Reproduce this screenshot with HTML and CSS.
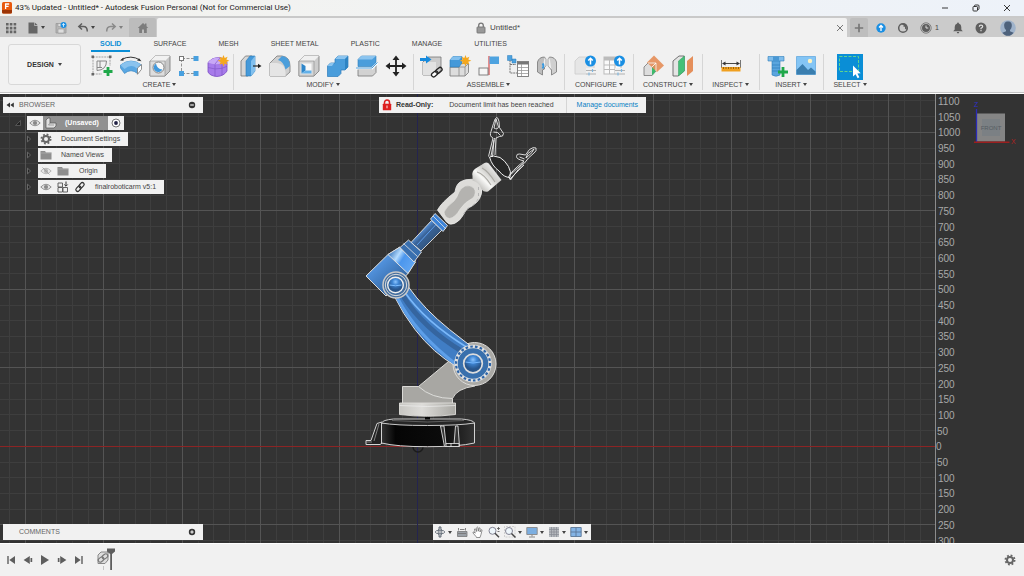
FILE: index.html
```html
<!DOCTYPE html>
<html lang="en">
<head>
<meta charset="utf-8">
<title>Untitled* - Autodesk Fusion Personal</title>
<link rel="stylesheet" href="styles.css">
</head>
<body>
<header class="titlebar">
  <svg class="app-logo" viewBox="0 0 10 12"><rect width="10" height="11.5" rx="1.5" fill="#e8590c"/><path d="M0 8h10v2a1.500 1.500 0 0 1-1.500 1.500h-7A1.500 1.500 0 0 1 0 10z" fill="#9c3506"/><path d="M3.600 7V2h3.600M3.600 4.300h3" stroke="#fff" stroke-width="1.300" fill="none"/></svg>
  <h1 class="title">43% Updated - Untitled* - Autodesk Fusion Personal (Not for Commercial Use)</h1>
  <div class="window-controls">
    <button aria-label="Minimize"><svg viewBox="0 0 10 10"><path d="M2 5h6" stroke="#222" stroke-width=".9"/></svg></button>
    <button aria-label="Restore"><svg viewBox="0 0 10 10"><rect x="2" y="3.500" width="4.500" height="4.500" rx=".8" fill="none" stroke="#222" stroke-width=".9"/><path d="M3.500 3.300V2.800Q3.500 2 4.300 2H7q1 0 1 1v2.700q0 .8-.8.8h-.5" fill="none" stroke="#222" stroke-width=".9"/></svg></button>
    <button aria-label="Close"><svg viewBox="0 0 10 10"><path d="M2 2l6 6M8 2l-6 6" stroke="#222" stroke-width=".9"/></svg></button>
  </div>
</header>

<div class="tabbar">
  <div class="quick">
    <button aria-label="Data panel"><svg class="i12" viewBox="0 0 12 12" fill="#666"><path d="M1 1h2.600v2.600H1zM4.800 1h2.600v2.600H4.800zM8.600 1h2.600v2.600H8.600zM1 4.800h2.600v2.600H1zM4.800 4.800h2.600v2.600H4.800zM8.600 4.800h2.600v2.600H8.600zM1 8.600h2.600v2.600H1zM4.800 8.600h2.600v2.600H4.800zM8.600 8.600h2.600v2.600H8.600z"/></svg></button>
    <button class="with-caret" aria-label="File"><svg class="i12" viewBox="0 0 12 12"><path d="M1.500.5h5.700v3.300h3.300V11.500h-9z" fill="#666"/><path d="M7.800.5l2.700 2.500H7.800z" fill="#666"/></svg><i class="caret"></i></button>
    <button class="save" aria-label="Save"><svg class="i12" viewBox="0 0 12 12"><path d="M1 1.500h8l2 2V11H1z" fill="#b5b5b5" stroke="#999" stroke-width=".8"/><path d="M3 1.500h4v3H3zM3 7h6v4H3z" fill="#ddd" stroke="#999" stroke-width=".6"/><circle cx="8.500" cy="3" r="3" fill="#1a8fe3"/><path d="M8.500 4.800V1.600M7.200 2.900l1.300-1.300 1.300 1.300" stroke="#fff" stroke-width=".8" fill="none"/></svg></button>
    <button class="with-caret" aria-label="Undo"><svg class="i12" viewBox="0 0 12 12"><path d="M5 1.500L1.800 4.500 5 7.500M2 4.500h4.500q3.800 0 3.800 5" fill="none" stroke="#5e5e5e" stroke-width="1.500"/></svg><i class="caret"></i></button>
    <button class="with-caret dim" aria-label="Redo"><svg class="i12" viewBox="0 0 12 12"><path d="M7 1.500l3.200 3L7 7.500M10 4.500H5.500q-3.800 0-3.800 5" fill="none" stroke="#555" stroke-width="1.500"/></svg><i class="caret"></i></button>
  </div>
  <button class="home-tab" aria-label="Home"><svg class="i12" viewBox="0 0 12 12"><path d="M6 1L.8 6h1.400v5h2.800V7.500h2V11h2.800V6h1.400L9.500 4.200V1.500H8v1.300z" fill="#7d7d7d"/></svg></button>
  <div class="doc-tab">
    <span class="doc-name"><svg class="i12" viewBox="0 0 12 12"><rect x="2" y="5" width="8" height="6" rx=".6" fill="#999" stroke="#777" stroke-width=".9"/><path d="M3.700 5V3.500a2.300 2.300 0 0 1 4.600 0V5" fill="none" stroke="#777" stroke-width="1.300"/></svg>Untitled*</span>
    <button class="doc-close" aria-label="Close document"><svg class="i8" viewBox="0 0 8 8"><path d="M1 1l6 6M7 1L1 7" stroke="#777" stroke-width="1"/></svg></button>
  </div>
  <button class="new-tab" aria-label="New design"><svg class="i10" viewBox="0 0 10 10"><path d="M5 .8v8.400M.8 5h8.400" stroke="#777" stroke-width="1.700"/></svg></button>
  <div class="status">
    <button aria-label="Updates"><svg class="i10" viewBox="0 0 10 10"><circle cx="5" cy="5" r="4.700" fill="#1a8fe3"/><path d="M5 8V2.500M3 4.500l2-2 2 2" stroke="#fff" stroke-width="1.300" fill="none"/></svg></button>
    <button aria-label="Extensions"><svg class="i12" viewBox="0 0 12 12"><circle cx="6" cy="6" r="4.300" fill="none" stroke="#5e5e5e" stroke-width="1.500"/><path d="M4.200 3h2.300v1.700H8v2l1.700 1V3L7 1.500z" fill="#5e5e5e"/></svg></button>
    <button class="jobs" aria-label="Job status: 1"><svg class="i12" viewBox="0 0 12 12"><circle cx="6" cy="6" r="5.200" fill="none" stroke="#777" stroke-width=".9"/><circle cx="6" cy="6" r="4" fill="#5e5e5e"/><path d="M6 3.500V6h2.300" stroke="#ddd" stroke-width="1" fill="none"/></svg><span>1</span></button>
    <button class="bell" aria-label="Notifications"><svg class="i12" viewBox="0 0 12 12"><path d="M6 .5q.9 0 .9 1 2.400.7 2.400 3.500v2.500l1.500 1.800H1.200l1.500-1.800V5q0-2.800 2.400-3.500 0-1 .9-1zM4.700 10h2.600q-.3 1.400-1.300 1.400T4.700 10z" fill="#5e5e5e"/></svg></button>
    <button aria-label="Help"><svg class="i12" viewBox="0 0 12 12"><circle cx="6" cy="6" r="5.500" fill="#5e5e5e"/><path d="M4.300 4.800q0-1.700 1.700-1.700t1.700 1.500Q7.700 5.500 6 6.300v.9M6 8v1.300" stroke="#ddd" stroke-width="1.200" fill="none"/></svg></button>
    <button class="avatar" aria-label="Account"><svg class="i16" viewBox="0 0 16 16"><circle cx="8" cy="8" r="7.800" fill="#9fb3cb"/><path d="M8 1.500c3 0 4 2 3.800 4.500-.2 2-1 3.300-1.800 4v1.200l3.600 1.500Q11.500 15.800 8 15.800t-5.600-3.100L6 11.200V10C5 9.300 4.300 8 4.200 6 4 3.500 5 1.500 8 1.500z" fill="#4e627c"/></svg></button>
  </div>
</div>

<div class="ribbon">
  <button class="workspace">DESIGN <i class="caret"></i></button>
  <div class="ribbon-main">
    <nav class="ribbon-tabs">
      <button class="rtab active">SOLID</button><button class="rtab">SURFACE</button><button class="rtab">MESH</button><button class="rtab">SHEET METAL</button><button class="rtab">PLASTIC</button><button class="rtab">MANAGE</button><button class="rtab">UTILITIES</button>
    </nav>
    <div class="groups">
      <section class="group">
        <div class="tools">
          <button aria-label="Create sketch"><svg viewBox="0 0 24 24"><path d="M3 3h17M3 3v17M20 3v9M3 20h9" stroke="#999" stroke-width=".9" stroke-dasharray="2 .8" fill="none"/><path d="M1.500 1.500h2.500v2.500H1.500zM19 1.500h2.500v2.500H19zM1.500 19h2.500v2.500H1.500z" fill="#666"/><path d="M7 16.500V7h9.500Q16.500 16 7 16.500zM10 7v6.500M7 13.500h5" stroke="#888" stroke-width="1" fill="none"/><path d="M18 13v9M13.500 17.500h9" stroke="#1fa84a" stroke-width="2.800"/></svg></button>
          <button aria-label="Extrude"><svg viewBox="0 0 24 24"><path d="M1.500 11Q12 3 22.500 11l-4 8.500Q12 14 5.500 19.500L1.500 14z" fill="#5aa7e2" stroke="#2e80bd" stroke-width=".6"/><path d="M1.500 11Q12 3.500 22 10.500l-4 4Q12 9.500 5.500 15z" fill="#8ac3ee"/><path d="M18.500 14l4-3.500v4.800l-4 5z" fill="#fff" stroke="#777" stroke-width=".8"/><path d="M2.500 5.500Q12 .5 21 6" fill="none" stroke="#333" stroke-width="1"/><path d="M1 6.500l3.500-3v3.300zM22.500 7.300l-4.500-.9 2-2.200z" fill="#333"/></svg></button>
          <button aria-label="Hole"><svg viewBox="0 0 24 24"><path d="M2 7l5-5h15v15l-5 5H2z" fill="#c7c7c7" stroke="#777" stroke-width=".8"/><path d="M2 7l5-5h15l-5 5z" fill="#f1f1f1"/><path d="M2 7h15v15H2z" fill="#ddd" stroke="#8c8c8c" stroke-width=".6"/><circle cx="10.500" cy="13.500" r="5.500" fill="#f8f8f8" stroke="#777" stroke-width=".9"/><path d="M8 9.500a4.600 4.600 0 1 0 6.400 6q-5.500-.5-6.400-6z" fill="#4299dc"/></svg></button>
          <button aria-label="Pattern"><svg viewBox="0 0 24 24"><path d="M5 4.500h14M4.500 5v14M5 19.500h14" stroke="#888" stroke-width=".9" stroke-dasharray="3 1.500"/><rect x="2.500" y="2.500" width="4" height="4" fill="#fff" stroke="#777"/><path d="M16.500 2h5v5h-5zM2 17h5v5H2zM16.500 17h5v5h-5z" fill="#48a0df"/></svg></button>
          <button aria-label="Create form"><svg viewBox="0 0 24 24"><path d="M2 8.500Q6 3.500 12 3.500t9 4.500v9q-3 5-10 5.500Q4 22 2 18z" fill="#a77bea" stroke="#7b4cc4" stroke-width=".8"/><path d="M2 8.500q6 3 14 1l5-2q-3-4-9-4T2 8.500z" fill="#c8a8f6"/><path d="M2 13.500q7 2.500 14 .8l5-2M9 10.500v12M16 9.500v11.500M9 10L14 4" stroke="#8257c9" stroke-width=".7" fill="none"/><path d="M17.500 1l1.200 3 2.900-1.300L20.400 5.500l3 1.200-3 1.200 1.200 2.900-2.900-1.200-1.200 3-1.200-3-2.900 1.200 1.200-2.900-3-1.200 3-1.200-1.200-2.800L16.300 4z" fill="#f5a81c"/></svg></button>
        </div>
        <button class="group-name">CREATE <i class="caret"></i></button>
      </section>
      <section class="group">
        <div class="tools">
          <button aria-label="Press pull"><svg viewBox="0 0 24 24"><path d="M2 7l4.500-5H13v15l-4 5H2z" fill="#d7d7d7" stroke="#777" stroke-width=".8"/><path d="M7 7l4-5h5v15l-4 5H7z" fill="#4599d9" stroke="#2879b5" stroke-width=".6"/><path d="M12 7l4-5v15l-4 5z" fill="#82c0ee"/><path d="M14 12h6" stroke="#222" stroke-width="1.200"/><path d="M19 9.800l3.500 2.200-3.500 2.200z" fill="#222"/></svg></button>
          <button aria-label="Fillet"><svg viewBox="0 0 24 24"><path d="M2 9l7-7h5q8 1 8 10v6l-4.500 4H2z" fill="#cfcfcf" stroke="#777" stroke-width=".8"/><path d="M2 9h7q8 1 8.500 9v4H2z" fill="#e5e5e5"/><path d="M10 6l4-4q8 1 8 10l-4.500 3.500Q16 8 10 6z" fill="#4b9edb"/></svg></button>
          <button aria-label="Shell"><svg viewBox="0 0 24 24"><path d="M2 7l5-5h15v15l-5 5H2z" fill="#ccc" stroke="#777" stroke-width=".8"/><path d="M2 7l5-5h15l-5 5z" fill="#f0f0f0"/><path d="M2 7h15v15H2z" fill="#d6d6d6" stroke="#888" stroke-width=".6"/><path d="M4.500 9.500h10v10h-10z" fill="#f8f8f8"/><path d="M4.500 9.500l4 2.500v4.500l-4 3z" fill="#2f86c9"/><path d="M4.500 19.500l4-3h6v3z" fill="#62b0e8"/></svg></button>
          <button aria-label="Combine"><svg viewBox="0 0 24 24"><path d="M1.500 12l3-3H9V5l3-3h10v11l-3 3h-4v3.500l-3 3H1.500z" fill="#4a9ddb" stroke="#2c7dbb" stroke-width=".7"/><path d="M1.500 12l3-3H9V5l3-3h10l-3 3H9v4H8l-2 3z" fill="#8bc4ef"/><path d="M19 5l3-3v11l-3 3z" fill="#2f84c3"/></svg></button>
          <button aria-label="Split body"><svg viewBox="0 0 24 24"><path d="M3 15h14l4-4v7.500L17.500 22H3z" fill="#d2d2d2" stroke="#777" stroke-width=".8"/><path d="M3 5.500L6.500 2H21v7l-4 3.500H3z" fill="#4a9ddb" stroke="#2c7dbb" stroke-width=".6"/><path d="M3 5.500L6.500 2H21l-4 3.500z" fill="#8bc4ef"/><path d="M1 14.500h16l5.500-5.500" fill="none" stroke="#fff" stroke-width="2"/><path d="M1 14h16l5.500-5.500" fill="none" stroke="#4a9ddb" stroke-width="1"/></svg></button>
          <button aria-label="Move"><svg viewBox="0 0 24 24"><path d="M12 4v16M4 12h16" stroke="#222" stroke-width="1.800"/><path d="M12 1.500L15.500 6h-7zM12 22.500L8.500 18h7zM1.500 12L6 8.500v7zM22.500 12L18 15.500v-7z" fill="#222"/></svg></button>
        </div>
        <button class="group-name">MODIFY <i class="caret"></i></button>
      </section>
      <section class="group">
        <div class="tools">
          <button aria-label="Insert component"><svg viewBox="0 0 24 24"><path d="M4 8l5-5h13v13l-5 5H4z" fill="#ccc" stroke="#777" stroke-width=".8"/><path d="M4 8h13v13H4z" fill="#e2e2e2"/><path d="M1 4h6V1.500L12.500 5.500 7 9.500V7H1z" fill="#168add"/><g transform="rotate(-40 18 18)"><rect x="11.500" y="16" width="7" height="4" rx="2" fill="#fff" stroke="#222" stroke-width="1.300"/><rect x="17" y="16" width="7" height="4" rx="2" fill="none" stroke="#222" stroke-width="1.300"/></g></svg></button>
          <button aria-label="New component"><svg viewBox="0 0 24 24"><path d="M2 13h9V9.500h9.500v9L17 22H2z" fill="#ddd" stroke="#777" stroke-width=".8"/><path d="M11 13v9M2 13h15l3.500-3.500M17 13v9" stroke="#888" stroke-width=".8" fill="none"/><path d="M2 6l3-3.500h9V9l-3 4H2z" fill="#4599d9" stroke="#2c7dbb" stroke-width=".6"/><path d="M2 6l3-3.500h9L11 6z" fill="#82c0ee"/><path d="M17.500 1l1.100 3 2.800-1.200-1.100 2.700 3 1.200-3 1.100 1.100 2.800-2.800-1.200-1.100 3-1.200-3-2.700 1.200 1.100-2.800-2.900-1.100 2.900-1.200-1.100-2.700L16.300 4z" fill="#f5a81c"/></svg></button>
          <button aria-label="Joint"><svg viewBox="0 0 24 24"><path d="M12 2v19" stroke="#d94b4b" stroke-width="1.200"/><rect x="12.500" y="2.500" width="9.500" height="7.500" fill="#4ea3e0"/><rect x="2" y="14" width="9" height="7" fill="#f6f6f6" stroke="#777" stroke-width=".9"/></svg></button>
          <button aria-label="Rigid group"><svg viewBox="0 0 24 24"><path d="M4 6v13h7M4 10.500h6" stroke="#777" stroke-width="1" fill="none" stroke-dasharray="2 .7"/><path d="M1.500 1.500H6v5H1.500zM6 5h4v4H6z" fill="#4ea3e0" stroke="#2c7dbb" stroke-width=".5"/><rect x="11.500" y="7.500" width="11" height="15" fill="#fff" stroke="#777" stroke-width=".9"/><path d="M11.500 8h11v2.500h-11z" fill="#777"/><path d="M12 13.500h10M12 16.500h10M12 19.500h10M15.500 10v12" stroke="#999" stroke-width=".8"/></svg></button>
          <button aria-label="Motion link"><svg viewBox="0 0 24 24"><path d="M2.500 8Q4 3 9.500 3v12l-2 1v5l-5-3z" fill="#bdbdbd" stroke="#777" stroke-width=".8"/><path d="M21.500 8Q20 3 14.500 3v10l2 3v5l5-3z" fill="#cfcfcf" stroke="#777" stroke-width=".8"/><path d="M9.500 3l1.500 2v7l-3.500 3M14.500 3L13 5v7l3.500 4" fill="#eee" stroke="#888" stroke-width=".7"/><path d="M7.500 9.500q2 2 0 5" stroke="#3a9ae0" stroke-width="1.800" fill="none"/></svg></button>
        </div>
        <button class="group-name">ASSEMBLE <i class="caret"></i></button>
      </section>
      <section class="group roomy">
        <div class="tools">
          <button aria-label="Configure design"><svg viewBox="0 0 24 24"><path d="M2 7l4-4h12l3 4v12l-3 1H2z" fill="#e6e6e6" stroke="#ccc" stroke-width=".8"/><circle cx="17.500" cy="7" r="5.500" fill="#1a8fe3"/><path d="M17.500 10.500V4.500M15.200 6.500l2.300-2.300 2.300 2.300" stroke="#fff" stroke-width="1.500" fill="none"/><path d="M13 14h10v8H13z" fill="#f1f1f1"/><path d="M13 16.500h10M13 20h10" stroke="#aaa" stroke-width=".9"/><path d="M19.500 15v3M16 18.500v3" stroke="#7fb8e2" stroke-width="1.200"/></svg></button>
          <button aria-label="Configuration table"><svg viewBox="0 0 24 24"><rect x="2" y="3" width="17" height="17" fill="#fafafa" stroke="#bbb"/><path d="M2 3h17v3.500H2z" fill="#bbb"/><path d="M2 11h17M2 15.500h17M7.500 6v14M13 6v14" stroke="#bbb"/><circle cx="17.500" cy="7" r="5.500" fill="#1a8fe3"/><path d="M17.500 10.500V4.500M15.200 6.500l2.300-2.300 2.300 2.300" stroke="#fff" stroke-width="1.500" fill="none"/><path d="M13 14h10v8H13z" fill="#f1f1f1"/><path d="M13 16.500h10M13 20h10" stroke="#aaa" stroke-width=".9"/><path d="M19.500 15v3M16 18.500v3" stroke="#7fb8e2" stroke-width="1.200"/></svg></button>
        </div>
        <button class="group-name">CONFIGURE <i class="caret"></i></button>
      </section>
      <section class="group roomy">
        <div class="tools">
          <button aria-label="Offset plane"><svg viewBox="0 0 24 24"><path d="M2 13l4-4h8v8l-4 4.500H2z" fill="#ddd" stroke="#777" stroke-width=".8"/><path d="M10 13l4-4v8l-4 4.500z" fill="#3cba6b"/><path d="M12 1.500L22 11.500 15 18 5 8.500z" fill="#e58f5b" opacity=".92"/><path d="M6 9h8l-4 4M14 9v8" stroke="#fff" stroke-width=".8" fill="none"/></svg></button>
          <button aria-label="Midplane"><svg viewBox="0 0 24 24"><path d="M2 7l6-5h5v15l-6 5H2z" fill="#e4e4e4" stroke="#666" stroke-width=".9"/><path d="M7.500 7l6-5v15l-6 5z" fill="#44c078" stroke="#2f9a5a" stroke-width=".5"/><path d="M16 7l6-5v15l-6 5z" fill="#e58f5b"/></svg></button>
        </div>
        <button class="group-name">CONSTRUCT <i class="caret"></i></button>
      </section>
      <section class="group">
        <div class="tools single">
          <button aria-label="Measure"><svg viewBox="0 0 24 24"><path d="M2.500 6v8M21.500 6v8" stroke="#666" stroke-width=".9"/><path d="M4 9.500h16" stroke="#333" stroke-width=".9"/><path d="M3 9.500L6.500 7.500v4zM21 9.500l-3.500-2v4z" fill="#333"/><path d="M2.500 13h19v4.500h-19z" fill="#f0a020"/><path d="M4.500 13v2M7 13v2M9.500 13v2M12 13v2M14.500 13v2M17 13v2M19.500 13v2" stroke="#7a4a00" stroke-width=".7"/></svg></button>
        </div>
        <button class="group-name">INSPECT <i class="caret"></i></button>
      </section>
      <section class="group">
        <div class="tools">
          <button aria-label="Insert fastener"><svg viewBox="0 0 24 24"><path d="M7 6h8v15q-4 2.500-8 0z" fill="#5aa5de" stroke="#2c7dbb" stroke-width=".6"/><path d="M3 2.500h16v4.500H3z" fill="#7fbdec" stroke="#2c7dbb" stroke-width=".6"/><path d="M8 2.500h6v4.500H8z" fill="#4a98d4"/><path d="M7 11h8M7 14h8M7 17h8" stroke="#2c7dbb" stroke-width=".7"/><path d="M18 13v10M13 18h10" stroke="#1fa84a" stroke-width="2.800"/></svg></button>
          <button aria-label="Canvas"><svg viewBox="0 0 24 24"><path d="M2.500 2.500h19v18h-19z" fill="#84c5f5" stroke="#5aa4db" stroke-width=".7"/><path d="M2.500 16l6-6 5.500 6 3-2.500 4.500 4v3h-19z" fill="#3a7eaf"/><circle cx="16" cy="7" r="2.200" fill="#fff3c0"/></svg></button>
        </div>
        <button class="group-name">INSERT <i class="caret"></i></button>
      </section>
      <section class="group">
        <div class="tools single">
          <button class="active-tool" aria-label="Select"><svg viewBox="0 0 26 26"><rect x="2.500" y="2.500" width="19" height="15" fill="none" stroke="#5fd38e" stroke-width="1" stroke-dasharray="3 1.500"/><path d="M16 11.500v11l2.600-2.300 2 4 1.800-.9-2-3.800 3.300-.2z" fill="#fff"/></svg></button>
        </div>
        <button class="group-name">SELECT <i class="caret"></i></button>
      </section>
    </div>
  </div>
</div>

<main class="viewport">
  <svg class="scene" viewBox="0 94 1024 449" preserveAspectRatio="xMidYMid slice">
    <defs>
      <linearGradient id="blueBox" x1="0" y1="0" x2=".7" y2=".8"><stop offset="0" stop-color="#3872b4"/><stop offset=".35" stop-color="#5496e2"/><stop offset="1" stop-color="#31629c"/></linearGradient>
      <linearGradient id="blueNeck" x1="0" y1=".2" x2="1" y2=".8"><stop offset="0" stop-color="#2f6db5"/><stop offset=".32" stop-color="#b5dcff"/><stop offset=".5" stop-color="#4b96ed"/><stop offset="1" stop-color="#67aaf4"/></linearGradient>
      <linearGradient id="rod" x1="0" y1="0" x2="1" y2="1"><stop offset=".3" stop-color="#5b9be8"/><stop offset=".45" stop-color="#3a6499"/><stop offset=".7" stop-color="#31557f"/></linearGradient>
      <linearGradient id="metal"><stop offset="0" stop-color="#c7c6c2"/><stop offset=".4" stop-color="#dddcd9"/><stop offset="1" stop-color="#aaa9a4"/></linearGradient>
      <linearGradient id="wrist" x1="0" y1="1" x2="1" y2="0"><stop offset=".1" stop-color="#aaa9a5"/><stop offset=".4" stop-color="#f8f8f6"/><stop offset=".6" stop-color="#cfcecb"/><stop offset=".8" stop-color="#eee"/></linearGradient>
      <linearGradient id="black"><stop offset="0" stop-color="#333"/><stop offset=".15" stop-color="#050505"/><stop offset=".65" stop-color="#0b0b0b"/><stop offset="1" stop-color="#333"/></linearGradient>
      <radialGradient id="ball" cx=".5" cy=".3"><stop offset="0" stop-color="#8cc5ff"/><stop offset=".4" stop-color="#3f86d4"/><stop offset="1" stop-color="#28558b"/></radialGradient>
    </defs>
    <rect y="94" width="1024" height="449" fill="#333"/>
    <g id="grid"></g>
    <path d="M417.500 94v449" stroke="#24244f" stroke-width="1"/>
    <path d="M0 446.500h936" stroke="#8c2424" stroke-width="1"/>
    <path d="M935.500 94v449" stroke="#8c8c8c" stroke-width="1"/>
    <g id="ruler" class="ruler"></g>
    <g class="view-cube">
      <rect x="977" y="113.500" width="28" height="28" fill="#858585"/>
      <rect x="982" y="119" width="18" height="17" fill="#7b8084"/>
      <path d="M976.500 142V109" stroke="#2b2bb8" stroke-width="1.300"/>
      <path d="M974 142.300h35.500" stroke="#9c1f1f" stroke-width="1.500"/>
      <text x="991" y="130" text-anchor="middle" class="cube-face">FRONT</text>
      <text x="974" y="107" class="cube-z">Z</text>
      <text x="1011" y="144" class="cube-x">X</text>
    </g>
    <g stroke-linejoin="round">
      <path d="M413 447a5 5 0 0 0 10 0" fill="none" stroke="#1c1c1c" stroke-width="1.500"/>
      <path d="M382 422l-5 1.500-6 17h-5v4h14l3-2z" fill="#222" stroke="#d5d5d5" stroke-width="1"/>
      <path d="M379 424l-5 17M366 442h6" stroke="#999" stroke-width=".8"/>
      <path d="M381.500 423v20q15 3.700 46 3.700t47-3.700v-20z" fill="url(#black)" stroke="#d2d2d2" stroke-width="1"/>
      <path d="M381.500 423q1-3 12-4h68q12 1 13 4-15 2.500-47 2.500t-46-2.500z" fill="#262626" stroke="#c8c8c8" stroke-width="1"/>
      <path d="M392 420.500q35 3 72 0" fill="none" stroke="#777" stroke-width=".7"/>
      <path d="M440.500 426h3.500l2 18.500h8l1.500-18.500h2.500l1.500 20.500h-15z" fill="#333" stroke="#ddd" stroke-width=".9"/>
      <path d="M446 443.500h13v3h-13zM451 443v3.500" fill="#222" stroke="#eee" stroke-width=".8"/>
      <path d="M425 416h5v3.500h-5z" fill="#080808"/>
      <path d="M448.500 361.500L418.500 386.500h-16v17h50v-5q4-10 22.500-12.500l-8-30z" fill="#a8a7a3" stroke="#dad9d6" stroke-width="1"/>
      <path d="M418.500 386.500q13 12 34 12" fill="none" stroke="#e2e2e0" stroke-width=".9"/>
      <path d="M399.500 403h56v11.500q-28 3.500-56 0z" fill="url(#metal)" stroke="#dfdeda" stroke-width=".9"/>
      <path d="M399.500 405.500q28 2 56 0" fill="none" stroke="#eee" stroke-width=".7"/>
      <circle cx="474.500" cy="364" r="21.500" fill="#aaa9a5" stroke="#dedddb" stroke-width="1"/>
      <path d="M408.500 287Q424 309 449.500 329.500L470 345.500 456.500 366.500Q433 353 415 329.500 403 314 394.500 296.500z" fill="#407dc4" stroke="#e3e3e3" stroke-width="1"/>
      <path d="M397.500 298Q415 333 457 365" stroke="#5d9fe9" stroke-width="3" fill="none"/>
      <path d="M403 296Q423 328 463 352" stroke="#35659f" stroke-width="5" fill="none"/>
      <path d="M404 291Q424 321 468 348" stroke="#7ab8fa" stroke-width="1.600" fill="none"/>
      <circle cx="473" cy="363.500" r="16" fill="#3970ad"/>
      <circle cx="473" cy="363.500" r="17" fill="none" stroke="#e0e0e0" stroke-width="3.400"/>
      <circle cx="473" cy="363.500" r="17" fill="none" stroke="#2e65a8" stroke-width="2.200" stroke-dasharray="2.600 2.200"/>
      <circle cx="473" cy="363.500" r="9.300" fill="url(#ball)" stroke="#ddd" stroke-width="1.700"/>
      <path d="M465.500 362q7.500 2 15 0" stroke="#75b6fc" stroke-width="1" fill="none"/>
      <path d="M366 276L388 254.500 399.500 247.300 415.500 260.500 408 273.500 386 296z" fill="url(#blueBox)" stroke="#dedede" stroke-width="1"/>
      <path d="M388 254.500L399.500 247.300 415.500 262 408 273.500z" fill="url(#blueNeck)" stroke="#dedede" stroke-width="1"/>
      <path d="M411 242.500L431.500 220.500 442 230 421 251z" fill="url(#rod)" stroke="#e3e3e3" stroke-width=".9"/>
      <path d="M417 245l19-20.500" stroke="#5b9be8" stroke-width="1"/>
      <path d="M408.500 240L421.500 252 414 262 400 247.500z" fill="#396faf" stroke="#e3e3e3" stroke-width=".9"/>
      <path d="M403.500 243.500l14 13" stroke="#e3e3e3" stroke-width=".8"/>
      <path d="M435 213.500L447.500 225.500 443 231.500 430.500 219z" fill="#3c83d8" stroke="#e3e3e3" stroke-width=".9"/>
      <path d="M433 216l13 13" stroke="#e3e3e3" stroke-width=".8"/>
      <circle cx="396" cy="285" r="13" fill="#456f9f" stroke="#c9c9c9" stroke-width="1.500"/>
      <circle cx="396" cy="285" r="10.700" fill="none" stroke="#ddd" stroke-width="1"/>
      <circle cx="395.500" cy="285" r="7.800" fill="url(#ball)" stroke="#eee" stroke-width="1.400"/>
      <path d="M389.500 285q6 1.500 12 0" stroke="#7bbcff" stroke-width="1" fill="none"/>
      <path d="M437.500 210Q441 203 455 192q1-8 6-10.500t8-2q6-1 9.500 3 4.500 5 3 11t-5 9q-4 3.500-8 5.500-3 2-5 6.500-3 6-9 9-5 2-8-1.500z" fill="#dddcd9" stroke="#efefee" stroke-width=".8"/>
      <path d="M465 186q5-1.500 9 2 3 5-1 10-8 4-12.500 10.500-5 9-11 10-5-1-5.500-6.500 2-5 10-11 3-3 5-9 2-4 6-6z" fill="#b4b3b0" stroke="#e5e5e3" stroke-width=".6"/>
      <path d="M478.500 187v11q-3 7-11 10.500-4 5-6 9" fill="none" stroke="#b5b5b5" stroke-width="1" stroke-dasharray="3 3"/>
      <path d="M472.500 176q-1-5 3-7.500l9-5.500q3-1.500 5.500 2L501.500 180 488 191.500q-4 1-6.500-2-2-7-9-9z" fill="url(#wrist)"/>
      <path d="M477 172q7 2 14 13M482 168q6 3 13 14" stroke="#aaa9a4" stroke-width="1.100" fill="none"/>
      <path d="M489.500 157l4-1 6.500 1.500q5 3 8.500 9 3 5 1.500 11-6 0-11-6.500-7-5-9.500-14z" fill="#272727" stroke="#f2f2f2" stroke-width="1"/>
      <g fill="none" stroke="#ececec" stroke-width=".9">
        <path d="M488.500 156.500L493 138q-4-2-2-6.500l2.500-8Q495 118 496.500 117.500t2.500 4l.5 6 4 6q0 3.500-4 3l-3.500 1.500-1 17"/>
        <path d="M491 156l3.500-18M492.500 157l1.500-17M494 128l2-9 2.500 8q-1 3-4.500 1zM493.500 132l4 .5 3 3"/>
        <path d="M508.500 177q2-5 15.500-16-8-2-7.500-4.500 0-3 3-2.500l6 1 4-5.500q4-3 6.500-1.500 1 3-2 5l-5.500 5-4 5q-5 4-14 17z"/>
        <path d="M510 175l14-12.500M510 179l14-14M526 157.500l2-4 6-4.500-2 3.500-6 5.500zM519.500 157l5 2"/>
      </g>
    </g>
  </svg>

  <aside class="browser">
    <header class="panel"><svg class="i8" viewBox="0 0 8 8"><path d="M4 1.500v5L.5 4zM7.800 1.500v5L4.300 4z" fill="#333"/></svg><h2>BROWSER</h2><button aria-label="Collapse browser"><svg class="i8" viewBox="0 0 8 8"><circle cx="4" cy="4" r="3.200" fill="#333"/><path d="M2.200 4h3.600" stroke="#fff" stroke-width="1.100"/></svg></button></header>
    <ul class="tree">
      <li class="root"><svg class="i8" viewBox="0 0 8 8"><path d="M6.500 1.500v5h-5z" fill="#222" stroke="#666" stroke-width=".7"/></svg>
        <div class="node"><span class="cell"><svg class="i12" viewBox="0 0 12 12"><use href="#eye"/></svg></span><span class="selected"><svg class="i12" viewBox="0 0 12 12"><path d="M1 3l2-2h2v5h6v3l-2 2H1z" fill="#e0e0e0" stroke="#555" stroke-width=".7"/><path d="M5 6L3.500 8H9" stroke="#777" stroke-width=".6" fill="none"/></svg><b>(Unsaved)</b></span><span class="cell"><svg class="i10" viewBox="0 0 10 10"><circle cx="5" cy="5" r="4" fill="#fff" stroke="#666" stroke-width=".9"/><circle cx="5" cy="5" r="1.900" fill="#224"/></svg></span></div></li>
      <li><svg class="i8" viewBox="0 0 8 8"><use href="#twist"/></svg><div class="node"><span class="cell"><svg class="i12" viewBox="0 0 12 12"><use href="#gear"/></svg></span><span class="name">Document Settings</span></div></li>
      <li><svg class="i8" viewBox="0 0 8 8"><use href="#twist"/></svg><div class="node"><span class="cell"><svg class="i12" viewBox="0 0 12 12"><use href="#folder"/></svg></span><span class="name">Named Views</span></div></li>
      <li><svg class="i8" viewBox="0 0 8 8"><use href="#twist"/></svg><div class="node"><span class="cell"><svg class="i12 faded" viewBox="0 0 12 12"><use href="#eye"/><path d="M2.500 2.500l7 7" stroke="#666" stroke-width=".8"/></svg></span><span class="cell wide"><svg class="i12" viewBox="0 0 12 12"><use href="#folder"/></svg></span><span class="name">Origin</span></div></li>
      <li><svg class="i8" viewBox="0 0 8 8"><use href="#twist"/></svg><div class="node"><span class="cell"><svg class="i12" viewBox="0 0 12 12"><use href="#eye"/></svg></span><span class="cell wide"><svg class="i12" viewBox="0 0 12 12"><path d="M1 2h4.500v4H1zM1 6.500h4.500V11H1zM6 6.500h4.500V11H6z" fill="#eee" stroke="#555" stroke-width=".9"/><path d="M9 .5v4.500M7.300 3.500L9 5.200l1.700-1.700" stroke="#333" stroke-width="1" fill="none"/></svg></span><span class="cell"><svg class="i12" viewBox="0 0 12 12"><g transform="rotate(-48 6 6)" fill="none" stroke="#333" stroke-width="1.200"><rect x=".7" y="4.200" width="6" height="3.600" rx="1.800"/><rect x="5.300" y="4.200" width="6" height="3.600" rx="1.800"/></g></svg></span><span class="name">finalroboticarm v5:1</span></div></li>
    </ul>
  </aside>

  <div class="notice" role="status">
    <svg class="i12" viewBox="0 0 12 12"><path d="M3.500 5.500V3.500a2.500 2.500 0 0 1 5 0v2" fill="none" stroke="#dd1f1f" stroke-width="1.500"/><rect x="1.800" y="4.800" width="8.400" height="6.400" rx=".5" fill="#dd1f1f"/><path d="M6 6.500v2.800" stroke="#fff" stroke-width=".9"/></svg>
    <b>Read-Only:</b><span class="message">Document limit has been reached</span><a href="#">Manage documents</a>
  </div>

  <section class="panel comments"><h2>COMMENTS</h2><button aria-label="Add comment"><svg class="i8" viewBox="0 0 8 8"><circle cx="4" cy="4" r="3.200" fill="#333"/><path d="M2.300 4h3.400M4 2.300v3.400" stroke="#fff" stroke-width="1"/></svg></button></section>

  <div class="navbar">
    <button class="with-caret" aria-label="Orbit"><svg class="i12" viewBox="0 0 12 12" fill="none" stroke="#68717a" stroke-width=".9"><ellipse cx="6" cy="6" rx="4.800" ry="1.800"/><ellipse cx="6" cy="6" rx="1.800" ry="4.500"/><path d="M6 .5v11M4.500 2L6 .5 7.500 2M4.500 10L6 11.500 7.500 10"/></svg><i class="caret"></i></button>
    <button aria-label="Look at"><svg class="i12" viewBox="0 0 12 12"><path d="M1.500 5.500h9.500v5H1.500z" fill="#9aa0a6" stroke="#777" stroke-width=".8"/><path d="M2.500 4.500V2M9.500 4.500V2M4 3.500h4.500M2 7.500h8" stroke="#777" stroke-width=".9"/></svg></button>
    <button aria-label="Pan"><svg class="i12" viewBox="0 0 12 12"><path d="M4 10.500L1 7q-.5-1.300 1-1l1.200 1.200L2.500 3q.5-1 1.200 0l.9 2.500L4.800 1.500q.7-1 1.200 0l.3 3.700.8-3.200q.8-.7 1 .3L8 6l1.200-2.200q.9-.4.800.6L9 8.500l-1 3H4.500z" fill="#fff" stroke="#666" stroke-width=".7"/></svg></button>
    <button aria-label="Zoom"><svg class="i12" viewBox="0 0 12 12"><circle cx="4.500" cy="4.800" r="3.500" fill="#eef6fb" stroke="#778" stroke-width=".9"/><path d="M7 7.300l4 4" stroke="#444" stroke-width="1.500"/><path d="M9 2.500h3M10.500 1v3M9.500 5.500h2" stroke="#555" stroke-width=".8"/></svg></button>
    <button class="with-caret" aria-label="Fit"><svg class="i12" viewBox="0 0 12 12"><path d="M.5 11V.5H11V11z" fill="none" stroke="#bbb" stroke-width=".6" stroke-dasharray="2 1"/><circle cx="5" cy="5" r="3.500" fill="#eef6fb" stroke="#778" stroke-width=".9"/><path d="M7.500 7.500l4 4" stroke="#444" stroke-width="1.500"/></svg><i class="caret"></i></button>
    <button class="with-caret" aria-label="Display settings"><svg class="i12" viewBox="0 0 12 12"><path d="M.8 1.500h10.400v7H.8z" fill="#7caee0" stroke="#888" stroke-width=".9"/><path d="M6 8.500v2M3 11h6" stroke="#888" stroke-width="1"/></svg><i class="caret"></i></button>
    <button class="with-caret" aria-label="Grid and snaps"><svg class="i12" viewBox="0 0 12 12"><path d="M1 1h10v10H1z" fill="#b5b9be"/><path d="M3.500 1v10M6 1v10M8.500 1v10M1 3.500h10M1 6h10M1 8.500h10" stroke="#868b93" stroke-width=".7"/></svg><i class="caret"></i></button>
    <button class="with-caret" aria-label="Viewports"><svg class="i12" viewBox="0 0 12 12"><path d="M.8 1.500h10.400v9H.8z" fill="#84b4e5" stroke="#5c7796" stroke-width=".9"/><path d="M6 1.500v9M.8 6h10.400" stroke="#5c7796" stroke-width=".9"/></svg><i class="caret"></i></button>
  </div>
</main>

<footer class="timeline">
  <div class="playback">
    <button aria-label="Go to start"><svg class="i10" viewBox="0 0 10 10"><path d="M1.300 1h1.400v8H1.300zM9 1v8L3.300 5z" fill="#5e5e5e"/></svg></button>
    <button aria-label="Step back"><svg class="i10" viewBox="0 0 10 10"><path d="M6.800 1v8L.6 5zM7.500 3H9.200v4H7.500z" fill="#5e5e5e"/></svg></button>
    <button aria-label="Play"><svg class="i10" viewBox="0 0 10 10"><path d="M1 0v10L9 5z" fill="#5e5e5e"/></svg></button>
    <button aria-label="Step forward"><svg class="i10" viewBox="0 0 10 10"><path d="M3.200 1v8L9.400 5zM.8 3h1.700v4H.8z" fill="#5e5e5e"/></svg></button>
    <button aria-label="Go to end"><svg class="i10" viewBox="0 0 10 10"><path d="M7.300 1h1.400v8H7.300zM1 1v8L6.700 5z" fill="#5e5e5e"/></svg></button>
  </div>
  <svg class="feature" viewBox="0 0 20 24"><path d="M2 7l3-3h7v8l-3 3.500H2z" fill="#ddd" stroke="#888" stroke-width="1"/><g transform="rotate(-38 7 10)" fill="none" stroke="#777" stroke-width="1.100"><rect x="1.500" y="8" width="6" height="4" rx="2"/><rect x="6.500" y="8" width="6" height="4" rx="2"/></g><path d="M7.500 18v4" stroke="#bbb" stroke-width=".8"/><path d="M11 .5h8V3.500L16 6v16h-1.800V6L11 3.500z" fill="#5e5e5e"/></svg>
  <button class="settings" aria-label="Timeline settings"><svg class="i12" viewBox="0 0 12 12"><use href="#gear"/></svg></button>
</footer>

<svg class="symbols" aria-hidden="true">
  <symbol id="eye" viewBox="0 0 12 12"><path d="M.8 6Q6 .5 11.200 6 6 11.500.8 6z" fill="#e3e3e3" stroke="#888" stroke-width=".9"/><circle cx="6" cy="6" r="2.100" fill="#888"/></symbol>
  <symbol id="gear" viewBox="0 0 12 12"><circle cx="6" cy="6" r="4.600" fill="none" stroke="#666" stroke-width="1.800" stroke-dasharray="1.810 1.810"/><circle cx="6" cy="6" r="3" fill="none" stroke="#666" stroke-width="2"/></symbol>
  <symbol id="folder" viewBox="0 0 12 12"><path d="M.5 2H5l1 1.500h5.500V10.500H.5z" fill="#8e8e8e"/><path d="M.5 4h11" stroke="#bbb" stroke-width=".6"/></symbol>
  <symbol id="twist" viewBox="0 0 8 8"><path d="M2.500 1.200v5.600L5.500 4z" fill="#222" stroke="#777" stroke-width=".8"/></symbol>
</svg>
<script src="scene.js"></script>
</body>
</html>
```
FILE: styles.css
```css
* { box-sizing: border-box; }
body {
  margin: 0;
  height: 100vh;
  display: grid;
  grid-template-rows: auto auto auto minmax(0, 1fr) auto;
  grid-template-columns: minmax(0, 1fr);
  overflow: hidden;
  background: #f1f1f1;
  color: #444;
  font: 7px/8px "Liberation Sans", Arial, sans-serif;
}
h1, h2, ul { margin: 0; padding: 0; font: inherit; list-style: none; }
button {
  display: flex;
  align-items: center;
  justify-content: center;
  padding: 0;
  border: 0;
  background: none;
  color: inherit;
  font: inherit;
  cursor: pointer;
}
svg { display: block; flex: none; }
.symbols { position: absolute; width: 0; height: 0; }
.i8 { width: 8px; height: 8px; }
.i10 { width: 10px; height: 10px; }
.i12 { width: 12px; height: 12px; }
.i16 { width: 16px; height: 16px; }
.caret {
  border: 2px solid transparent;
  border-top: 3px solid #444;
  border-bottom: 0;
}

.titlebar {
  display: flex;
  align-items: center;
  height: 18px;
  padding: 0 2px;
  border-bottom: 2px solid #c9c9c9;
  background: linear-gradient(90deg, #f4f3ee, #edf2f9);
}
.app-logo { width: 10px; height: 12px; }
.title { flex: 1; padding-left: 3px; color: #222; font: 8px/12px Roboto, "Noto Sans", sans-serif; }
.window-controls { display: flex; gap: 21px; padding-right: 10px; }
.window-controls svg { width: 10px; height: 10px; }

.tabbar { display: flex; height: 19px; background: #cbcbcb; }
.quick { display: flex; align-items: center; gap: 10px; width: 129px; padding-left: 5px; }
.with-caret { gap: 2px; }
.dim { opacity: .55; }
.home-tab { width: 27px; background: #bcbcbc; border-radius: 2px 2px 0 0; }
.doc-tab {
  flex: 1;
  display: flex;
  align-items: center;
  margin-left: 1px;
  padding-right: 3px;
  background: #f1f1f1;
  border-radius: 2px 2px 0 0;
}
.doc-name { flex: 1; display: flex; align-items: center; justify-content: center; gap: 3px; padding-left: 2px; font-size: 8px; line-height: 10px; }
.new-tab { width: 18px; margin-left: 3px; background: #bebebe; border-radius: 2px 2px 0 0; }
.status { display: flex; align-items: center; gap: 11px; padding: 0 8px; }
.jobs { gap: 3px; }
.bell { margin-left: 2px; }
.avatar { margin-left: 2px; }

.ribbon { display: flex; height: 57px; border-bottom: 1px solid #fff; box-shadow: inset 0 -1px #c4c4c4; }
.workspace {
  gap: 4px;
  width: 73px;
  height: 41px;
  margin: 7px 6px 0 8px;
  border: 1px solid #d8d8d8;
  border-radius: 3px;
  background: #f3f3f3;
  color: #333;
  font-weight: bold;
}
.ribbon-main { flex: 1; }
.ribbon-tabs { display: flex; gap: 14px; height: 15px; padding-left: 4px; }
.rtab { padding: 0 9px; border-bottom: 2px solid transparent; }
.rtab.active { border-color: #0a8ed6; color: #0a8ed6; font-weight: bold; }
.groups { display: flex; padding-top: 2px; }
.group { padding: 0 3px 0 2px; border-right: 1px solid #d6d6d6; }
.group:first-child { padding: 0 1px 0 0; }
.group:last-child { border: 0; }
.group.roomy { padding: 0 5px; }
.tools { display: flex; justify-content: center; height: 25px; }
.tools button { width: 29px; height: 24px; }
.tools svg { width: 24px; height: 24px; }
.single { padding: 0 11px; }
.tools .active-tool { width: 26px; height: 26px; background: #0a8ed6; }
.active-tool svg { width: 26px; height: 26px; }
.group-name { gap: 2px; width: 100%; height: 11px; }

.viewport {
  position: relative;
  display: grid;
  grid-template-columns: minmax(0, 1fr) auto minmax(0, 1fr);
  grid-template-rows: 1fr auto;
  padding: 3px 2px 3px 3px;
  overflow: hidden;
  background: #333;
}
.scene { position: absolute; inset: 0; width: 100%; height: 100%; }
.ruler { fill: #a9a9a9; font-size: 10px; }
.cube-face { fill: #565d63; font-size: 6px; }
.cube-z { fill: #3030c8; font-size: 7px; }
.cube-x { fill: #b02222; font-size: 7px; }
.browser, .notice, .comments, .navbar { position: relative; }
.panel {
  display: flex;
  align-items: center;
  width: 200px;
  height: 16px;
  padding: 0 7px 0 3px;
  background: #f1f1f1;
  color: #666;
}
.panel h2 { flex: 1; padding-left: 5px; }
.comments { grid-row: 2; grid-column: 1; }
.comments h2 { padding-left: 13px; }
.tree { display: grid; gap: 2px; padding: 3px 0 0 22px; }
.tree li { display: flex; align-items: center; gap: 5px; height: 14px; }
.tree .root { margin-left: -11px; }
.node { display: flex; align-items: stretch; height: 14px; background: #f1f1f1; }
.cell { display: flex; align-items: center; justify-content: center; width: 16px; }
.wide { width: 18px; }
.name { padding: 3px 8px 3px 7px; line-height: 8px; }
.selected { display: flex; align-items: center; gap: 8px; padding: 0 9px 0 2px; background: #909090; color: #fff; }
.faded { opacity: .6; }

.notice {
  align-self: start;
  display: flex;
  align-items: center;
  height: 16px;
  padding: 0 8px 0 2px;
  background: #f1f1f1;
}
.notice b { padding: 0 16px 0 3px; color: #333; }
.message { padding-right: 12px; }
.notice a {
  display: flex;
  align-items: center;
  height: 16px;
  padding-left: 10px;
  border-left: 1px solid #d5d5d5;
  color: #0a7fc4;
  text-decoration: none;
}
.navbar {
  grid-row: 2;
  grid-column: 2;
  justify-self: center;
  display: flex;
  align-items: center;
  gap: 4px;
  height: 16px;
  padding: 0 3px 0 1px;
  background: #f1f1f1;
}

.timeline { display: flex; align-items: center; height: 33px; padding: 0 8px 0 6px; border-top: 1px solid #fff; }
.playback { display: flex; gap: 7px; }
.feature { width: 20px; height: 24px; margin-left: 12px; }
.settings { margin-left: auto; }
```
FILE: scene.js
```js
const NS = 'http://www.w3.org/2000/svg';
const grid = document.getElementById('grid');
const ruler = document.getElementById('ruler');
const step = 15.7;
const origin = { x: 417.8, y: 446.3 };
const right = 936;

function line(x1, y1, x2, y2, major) {
  const el = document.createElementNS(NS, 'path');
  el.setAttribute('d', `M${x1} ${y1}L${x2} ${y2}`);
  el.setAttribute('stroke', major ? '#545454' : '#3e3e3e');
  el.setAttribute('stroke-width', 1);
  grid.appendChild(el);
}

for (const major of [false, true]) {
  for (let i = -26; i <= 32; i++) {
    const x = Math.floor(origin.x + i * step) + 0.5;
    if ((i % 5 === 0) === major) line(x, 94, x, 543, major);
  }
  for (let i = -6; i <= 22; i++) {
    const y = Math.floor(origin.y - i * step) + 0.5;
    if ((i % 5 === 0) === major) line(0, y, right, y, major);
  }
}

for (let i = -6; i <= 22; i++) {
  const value = Math.abs(i * 50);
  const label = document.createElementNS(NS, 'text');
  label.setAttribute('x', value === 0 ? 936 : value < 100 ? 937 : 938);
  label.setAttribute('y', Math.round(origin.y - i * step) + 4);
  label.textContent = value;
  ruler.appendChild(label);
}
```
